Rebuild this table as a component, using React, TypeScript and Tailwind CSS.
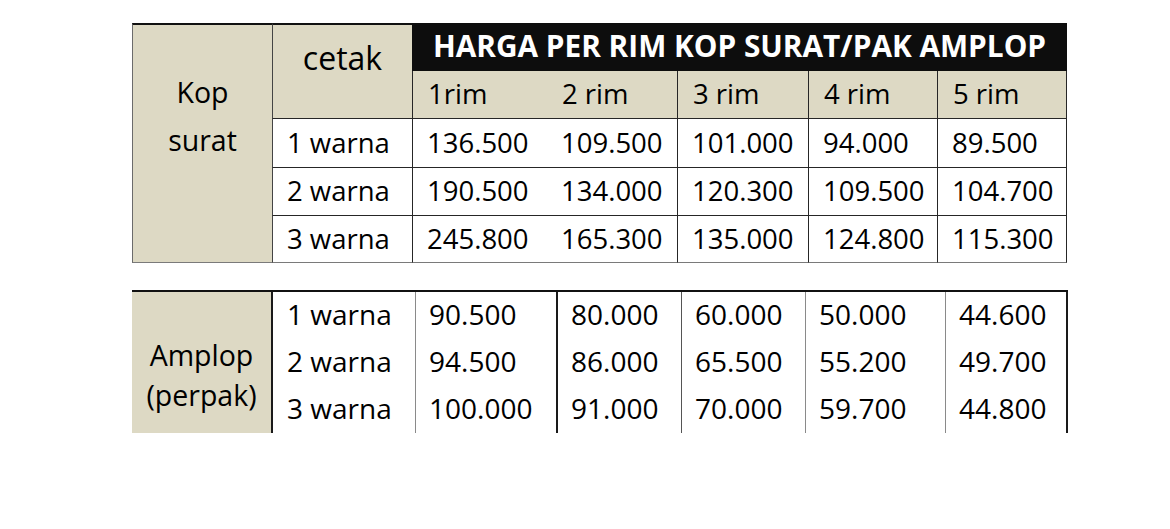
import React from 'react';

const kopRows = [
  { label: '1 warna', prices: ['136.500', '109.500', '101.000', '94.000', '89.500'] },
  { label: '2 warna', prices: ['190.500', '134.000', '120.300', '109.500', '104.700'] },
  { label: '3 warna', prices: ['245.800', '165.300', '135.000', '124.800', '115.300'] },
];

const amplopRows = [
  { label: '1 warna', prices: ['90.500', '80.000', '60.000', '50.000', '44.600'] },
  { label: '2 warna', prices: ['94.500', '86.000', '65.500', '55.200', '49.700'] },
  { label: '3 warna', prices: ['100.000', '91.000', '70.000', '59.700', '44.800'] },
];

// per-column left border for the price cells of the top table
const kopBorders = [
  'border-l border-[#262626]',
  '',
  'border-l border-[#262626]',
  'border-l border-[#262626]',
  'border-l border-r border-[#262626]',
];

const amplopBorders = [
  'border-l border-[#8a8a8a]',
  'border-l-2 border-[#1a1a1a]',
  'border-l border-[#555]',
  'border-l border-[#8a8a8a]',
  'border-l border-r-2 border-l-[#8a8a8a] border-r-[#1a1a1a]',
];

export default function App() {
  return (
    <div
      className="w-[1170px] h-[529px] bg-white pl-[132px] pt-[23px] text-black"
      style={{ fontFamily: '"Open Sans", "Noto Sans", sans-serif' }}
    >
      {/* Kop surat */}
      <div className="w-[935px] text-[27.5px] grid grid-cols-[140px_140px_135px_130px_131px_129px_130px] grid-rows-[48px_48px_49px_48px_47px]">
        <div className="row-span-5 bg-[#ddd9c4] border-t-2 border-t-[#111] border-l border-l-[#6b6b6b] border-b border-b-[#7a7a7a] flex flex-col items-center pt-[43px] leading-[48px] text-[28.5px]">
          <span>Kop</span>
          <span>surat</span>
        </div>
        <div className="row-span-2 bg-[#ddd9c4] border-t-2 border-t-[#111] border-l border-l-[#444] border-b border-b-[#262626] flex justify-center pt-[9px] leading-[48px] text-[32px]">
          cetak
        </div>
        <div className="col-span-5 bg-[#0d0d0d] text-white font-bold text-[29.8px] flex items-center justify-center pb-[2px]">
          HARGA PER RIM KOP SURAT/PAK AMPLOP
        </div>
        {['1rim', '2 rim', '3 rim', '4 rim', '5 rim'].map((h, i) => (
          <div
            key={h}
            className={`bg-[#ddd9c4] border-b border-b-[#262626] flex items-center pl-[15px] pb-[1px] ${kopBorders[i]}`}
          >
            {h}
          </div>
        ))}
        {kopRows.map((row, r) => (
          <React.Fragment key={row.label}>
            <div
              className={`border-l border-l-[#444] flex items-center pl-[14px] pb-[1px] ${
                r === 2 ? 'border-b border-b-[#7a7a7a]' : 'border-b border-b-[#262626]'
              }`}
            >
              {row.label}
            </div>
            {row.prices.map((p, i) => (
              <div
                key={i}
                className={`flex items-center pl-[14px] pb-[1px] ${kopBorders[i]} ${
                  r === 2 ? 'border-b border-b-[#7a7a7a]' : 'border-b border-b-[#262626]'
                }`}
              >
                {p}
              </div>
            ))}
          </React.Fragment>
        ))}
      </div>

      {/* Amplop */}
      <div className="mt-[27px] w-[936px] text-[28px] border-t-2 border-[#111] grid grid-cols-[141px_142px_141px_125px_124px_140px_123px] grid-rows-[47px_47px_47px]">
        <div className="row-span-3 bg-[#ddd9c4] border-r-2 border-r-[#1a1a1a] flex flex-col items-center pt-[43px] leading-[40px] text-[28.5px]">
          <span>Amplop</span>
          <span>(perpak)</span>
        </div>
        {amplopRows.map((row) => (
          <React.Fragment key={row.label}>
            <div className="flex items-center pl-[14px] pb-[3px]">{row.label}</div>
            {row.prices.map((p, i) => (
              <div key={i} className={`flex items-center pl-[13px] pb-[3px] ${amplopBorders[i]}`}>
                {p}
              </div>
            ))}
          </React.Fragment>
        ))}
      </div>
    </div>
  );
}
